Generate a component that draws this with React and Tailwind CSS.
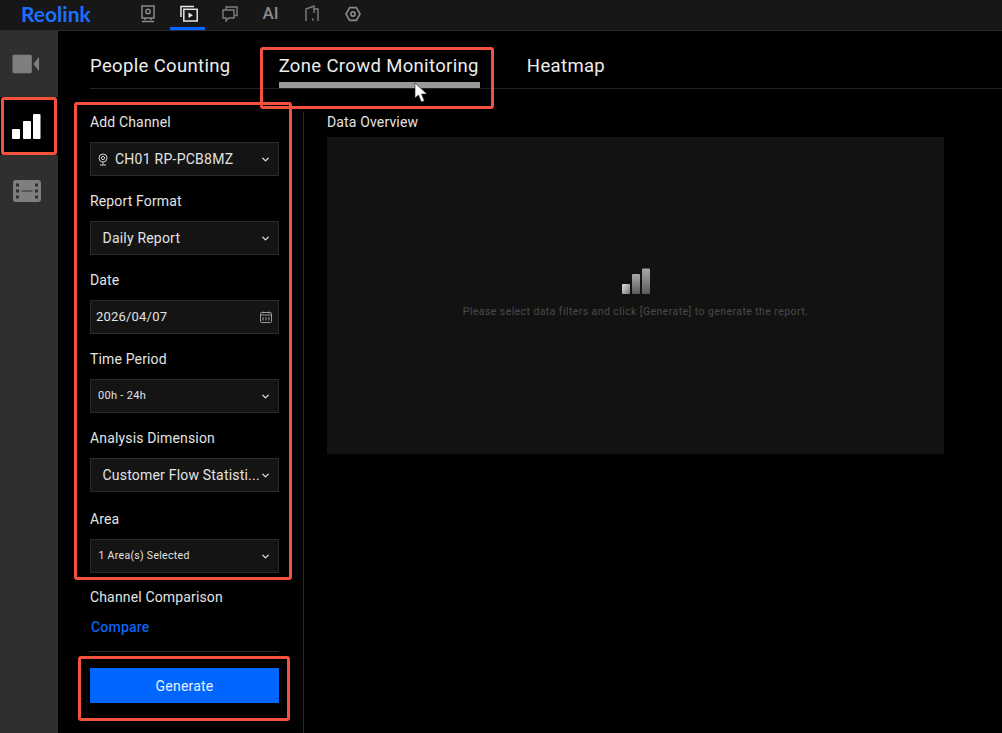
import { ChevronDown } from 'lucide-react'

function NavIcons() {
  return (
    <div className="ml-[26px] flex h-full items-center">
      <div className="flex h-full w-[41px] items-center justify-center pb-[3px] text-[#8a8a8a]">
        <svg width="16" height="18" viewBox="0 0 16 18" fill="none" stroke="currentColor" strokeWidth="1.5">
          <rect x="2" y="1" width="12" height="12" />
          <circle cx="8" cy="6.5" r="2.2" />
          <path d="M5 13v2M11 13v2M2 16.5h12" />
        </svg>
      </div>
      <div className="relative flex h-full w-[41px] items-center justify-center pb-[3px] text-[#e6e6e6]">
        <svg width="18" height="17" viewBox="0 0 18 17" fill="none" stroke="currentColor" strokeWidth="1.5">
          <path d="M1 12V1.5h13" />
          <rect x="3.8" y="4.3" width="13.4" height="11.7" />
          <path d="M8.5 7.5v5.5l4.5-2.7z" fill="currentColor" stroke="none" />
        </svg>
        <span className="absolute bottom-0 left-[2px] h-[3px] w-[35px] bg-[#0066ff]" />
      </div>
      <div className="flex h-full w-[41px] items-center justify-center pb-[3px] text-[#7d7d7d]">
        <svg width="16" height="16" viewBox="0 0 16 16" fill="none" stroke="currentColor" strokeWidth="1.4">
          <path d="M4 4V1h11v8.500h-2.500" />
          <path d="M1 4h11v8H6.500L4 15v-3H1z" />
        </svg>
      </div>
      <div className="flex h-full w-[41px] items-center justify-center pb-[3px] text-[17px] font-medium text-[#8c8c8c]">AI</div>
      <div className="flex h-full w-[41px] items-center justify-center pb-[3px] text-[#7d7d7d]">
        <svg width="14" height="17" viewBox="0 0 14 17" fill="none" stroke="currentColor" strokeWidth="1.4">
          <path d="M1 16V4l8-3v3h4v12" />
          <path d="M9 4v4" />
          <path d="M7 14.500h1.600" strokeWidth="1.8" />
        </svg>
      </div>
      <div className="flex h-full w-[41px] items-center justify-center pb-[3px] text-[#8a8a8a]">
        <svg width="16" height="16" viewBox="0 0 16 16" fill="none" stroke="currentColor" strokeWidth="1.6">
          <path d="M4.600 1.600h6.800L15 8l-3.600 6.400H4.600L1 8z" strokeLinejoin="round" />
          <circle cx="8" cy="8" r="2.100" />
        </svg>
      </div>
    </div>
  )
}

function Sidebar() {
  return (
    <aside className="flex w-[58px] shrink-0 flex-col items-stretch bg-[#2f2f2f]">
      <div className="flex h-[66px] items-center justify-center pr-[5px] text-[#7f7f7f]">
        <svg width="29" height="20" viewBox="0 0 30 20" fill="currentColor">
          <rect x="0.500" y="0.500" width="20" height="19" rx="1.500" />
          <path d="M22.500 9.500 28 2.500v15l-5.500-7z" />
        </svg>
      </div>
      <div className="flex h-[58px] items-center justify-center bg-black pr-[6px] text-white">
        <svg width="30" height="27" viewBox="0 0 30 27" fill="currentColor">
          <rect x="1" y="16" width="8" height="10" rx="1" />
          <rect x="12" y="8" width="8" height="18" rx="1" />
          <rect x="22" y="1" width="7.500" height="25" rx="1" />
        </svg>
      </div>
      <div className="flex h-[74px] items-center justify-center pr-[4px] pb-[2px] text-[#7f7f7f]">
        <svg width="28" height="22" viewBox="0 0 28 22">
          <rect width="28" height="22" rx="3" fill="currentColor" />
          <g fill="#2f2f2f">
            <rect x="3" y="3.500" width="3" height="3" />
            <rect x="3" y="9.500" width="3" height="3" />
            <rect x="3" y="15.500" width="3" height="3" />
            <rect x="22" y="3.500" width="3" height="3" />
            <rect x="22" y="9.500" width="3" height="3" />
            <rect x="22" y="15.500" width="3" height="3" />
            <rect x="8.500" y="10.500" width="11" height="1" />
          </g>
        </svg>
      </div>
    </aside>
  )
}

function Field({ label, className = '', children, icon }) {
  return (
    <div className={`mb-[14px] ${className}`}>
      <p className="mb-[9px] pt-[1px] text-[14px] leading-[21px] tracking-[0.15px] text-[#e3e3e3]">{label}</p>
      <div className="flex h-[34px] items-center border border-[#2b2b2b] bg-[#141414] text-[#e3e3e3]">
        {children}
        {icon ?? <ChevronDown size={11} strokeWidth={3} className="mr-[7px] ml-auto shrink-0 text-[#dcdcdc]" />}
      </div>
    </div>
  )
}

function FilterPanel() {
  return (
    <div className="w-[189px] shrink-0 pt-[22px]">
      <Field label="Add Channel">
        <svg width="10" height="13" viewBox="0 0 10 13" fill="none" stroke="#cfcfcf" strokeWidth="1" className="ml-[7px]">
          <circle cx="5" cy="5" r="4" />
          <circle cx="5" cy="5" r="1.600" />
          <path d="M5 9v2.500M2 12h6" />
        </svg>
        <span className="ml-[7px] text-[14px] tracking-[0.25px]">CH01 RP-PCB8MZ</span>
      </Field>
      <Field label="Report Format">
        <span className="ml-[11.500px] text-[14px] tracking-[0.2px]">Daily Report</span>
      </Field>
      <Field
        label="Date"
        icon={
          <svg width="12" height="12" viewBox="0 0 12 12" fill="none" stroke="#9a9a9a" strokeWidth="1" className="mr-[6px] ml-auto">
            <rect x="0.500" y="1.500" width="11" height="10" rx="1" />
            <path d="M0.500 4h11M3 0.500v2M9 0.500v2M3 6v3.500M6 6v3.500M9 6v3.500" />
          </svg>
        }
      >
        <span className="ml-[5px] text-[13px] tracking-[0.2px]">2026/04/07</span>
      </Field>
      <Field label="Time Period">
        <span className="ml-[7px] text-[11px] tracking-[0.3px]">00h - 24h</span>
      </Field>
      <Field
        label="Analysis Dimension"
        icon={<ChevronDown size={11} strokeWidth={3} className="mr-[7px] ml-auto shrink-0 text-[#dcdcdc]" />}
      >
        <span className="ml-[11.500px] whitespace-nowrap text-[14px] tracking-[0.2px]">Customer Flow Statisti...</span>
      </Field>
      <Field label="Area" className="mt-[16px]">
        <span className="ml-[7.500px] text-[10.500px] tracking-[0.3px]">1 Area(s) Selected</span>
      </Field>
      <p className="mt-[11px] text-[14px] leading-[21px] tracking-[0.15px] text-[#e3e3e3]">Channel Comparison</p>
      <p className="mt-[9px] pl-[1px] text-[14px] leading-[21px] font-medium tracking-[0.2px] text-[#0a63f0]">Compare</p>
      <div className="mt-[13px] h-px bg-[#2a2a2a]" />
      <button className="mt-[16px] flex h-[35px] w-full items-center justify-center bg-[#0066ff] pt-[1px] text-[14px] tracking-[0.2px] text-[#e8f0ff]">
        Generate
      </button>
    </div>
  )
}

function Tab({ children, active, className = '' }) {
  return (
    <div className={`relative flex h-full items-center pt-[14px] text-[18.500px] font-[450] tracking-[0.35px] text-[#ececec] ${className}`}>
      {children}
      {active && <span className="absolute right-[-1px] bottom-0 left-0 h-[6px] bg-[#999999]" />}
    </div>
  )
}

function Annotation({ className }) {
  return <div className={`pointer-events-none absolute rounded-[3px] border-[3px] border-[#f4523f] ${className}`} />
}

export default function App() {
  return (
    <div
      className="relative flex h-[733px] w-[1002px] flex-col overflow-hidden bg-black"
      style={{ fontFamily: 'Roboto, "Liberation Sans", sans-serif' }}
    >
      <header className="flex h-[31px] shrink-0 items-center border-b border-[#2a2a2a] bg-[#171717]">
        <span className="ml-[21px] w-[80px] pb-[3px] text-[21px] leading-none font-bold text-[#1a70ff]" style={{ fontFamily: 'Lato, sans-serif' }}>
          Reolink
        </span>
        <NavIcons />
      </header>

      <div className="flex min-h-0 flex-1">
        <Sidebar />
        <main className="flex min-w-0 flex-1 flex-col pl-[32px]">
          <nav className="flex h-[58px] shrink-0 border-b border-[#242424]">
            <Tab>People Counting</Tab>
            <Tab active className="ml-[48px]">Zone Crowd Monitoring</Tab>
            <Tab className="ml-[48px]">Heatmap</Tab>
          </nav>
          <div className="flex min-h-0 flex-1">
            <FilterPanel />
            <div className="mt-[23px] ml-[24px] w-px bg-[#2a2a2a]" />
            <section className="ml-[23px] w-[617px] pt-[22px]">
              <p className="pt-[1px] text-[14px] leading-[21px] tracking-[0.15px] text-[#e3e3e3]">Data Overview</p>
              <div className="mt-[4px] flex h-[317px] flex-col items-center justify-center bg-[#121212] pb-[4px]">
                <svg width="30" height="26" viewBox="0 0 30 26">
                  <defs>
                    <linearGradient id="barA" x1="0" y1="0" x2="1" y2="1">
                      <stop offset="0" stopColor="#e0e0e0" />
                      <stop offset="1" stopColor="#777777" />
                    </linearGradient>
                    <linearGradient id="barB" x1="0" y1="0" x2="0" y2="1">
                      <stop offset="0" stopColor="#a8a8a8" />
                      <stop offset="1" stopColor="#5a5a5a" />
                    </linearGradient>
                  </defs>
                  <rect x="1" y="16" width="8" height="10" rx="1" fill="url(#barA)" />
                  <rect x="11" y="6" width="8" height="20" rx="1" fill="url(#barB)" />
                  <rect x="21" y="0.500" width="8" height="25.500" rx="1" fill="url(#barB)" />
                </svg>
                <p className="mt-[10px] text-[10.500px] tracking-[0.42px] text-[#4a4a4a]">
                  Please select data filters and click [Generate] to generate the report.
                </p>
              </div>
            </section>
          </div>
        </main>
      </div>

      <Annotation className="top-[97px] left-[1px] h-[58px] w-[56px]" />
      <Annotation className="top-[47px] left-[260px] h-[62px] w-[234px]" />
      <Annotation className="top-[102px] left-[74px] h-[478px] w-[218px]" />
      <Annotation className="top-[656px] left-[78px] h-[65px] w-[212px]" />

      <svg width="15" height="22" viewBox="0 0 15 22" className="absolute top-[82px] left-[414px]">
        <path d="M1 1v15l3.500-3 2.800 7 3-1.200-2.800-6.800H13z" fill="#fff" stroke="#222" strokeWidth="0.6" />
      </svg>
    </div>
  )
}
